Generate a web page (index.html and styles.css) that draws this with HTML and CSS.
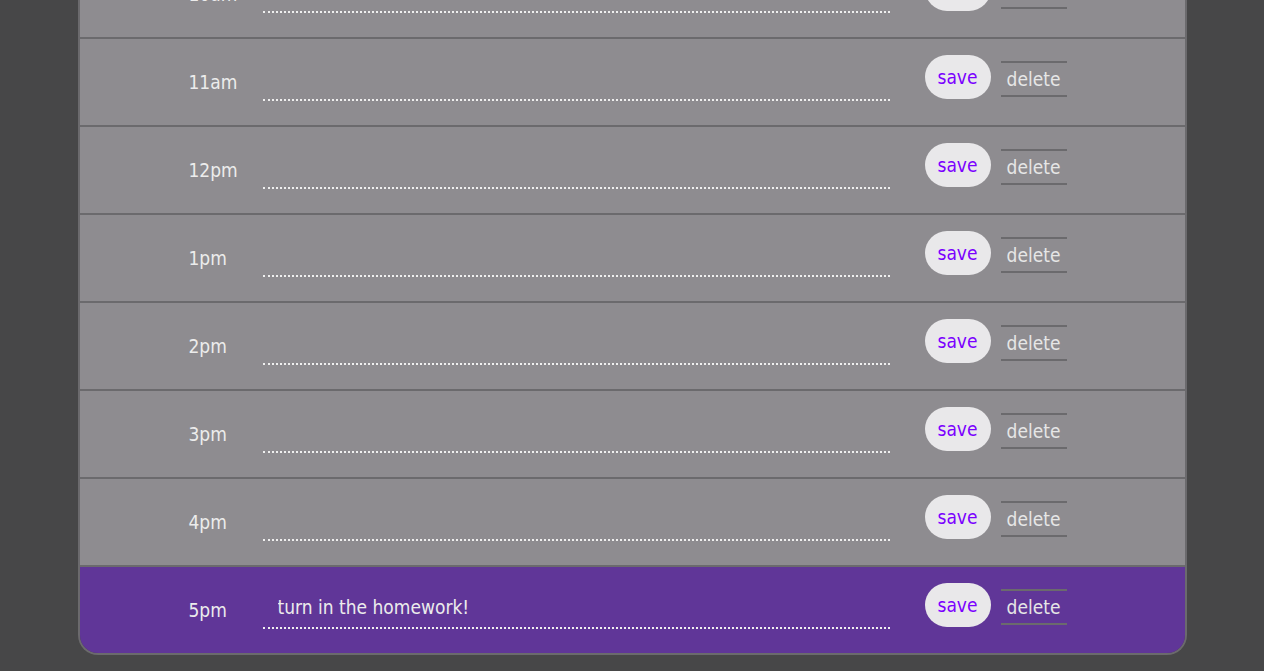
FILE: index.html
```html
<!DOCTYPE html>
<html lang="en">
<head>
<meta charset="utf-8">
<title>Work Day Scheduler</title>
<link rel="stylesheet" href="styles.css">
</head>
<body>
<header class="jumbotron">
  <h1 class="title">Work Day Scheduler</h1>
  <p class="lead">A simple calendar app for scheduling your work day</p>
  <p class="today">Friday, March 3</p>
</header>
<main class="planner">
  <div class="hour-row past"><span class="hour">9am</span><input class="task" type="text"><div class="actions"><button class="save">save</button><button class="delete">delete</button></div></div>
  <div class="hour-row past"><span class="hour">10am</span><input class="task" type="text"><div class="actions"><button class="save">save</button><button class="delete">delete</button></div></div>
  <div class="hour-row past"><span class="hour">11am</span><input class="task" type="text"><div class="actions"><button class="save">save</button><button class="delete">delete</button></div></div>
  <div class="hour-row past"><span class="hour">12pm</span><input class="task" type="text"><div class="actions"><button class="save">save</button><button class="delete">delete</button></div></div>
  <div class="hour-row past"><span class="hour">1pm</span><input class="task" type="text"><div class="actions"><button class="save">save</button><button class="delete">delete</button></div></div>
  <div class="hour-row past"><span class="hour">2pm</span><input class="task" type="text"><div class="actions"><button class="save">save</button><button class="delete">delete</button></div></div>
  <div class="hour-row past"><span class="hour">3pm</span><input class="task" type="text"><div class="actions"><button class="save">save</button><button class="delete">delete</button></div></div>
  <div class="hour-row past"><span class="hour">4pm</span><input class="task" type="text"><div class="actions"><button class="save">save</button><button class="delete">delete</button></div></div>
  <div class="hour-row present"><span class="hour">5pm</span><input class="task" type="text" value="turn in the homework!"><div class="actions"><button class="save">save</button><button class="delete">delete</button></div></div>
</main>
<script src="script.js"></script>
</body>
</html>
```
FILE: styles.css
```css
html, body {
  margin: 0;
  padding: 0;
  background: #474748;
  font-family: "DejaVu Sans Condensed", "DejaVu Sans", sans-serif;
  font-size: 19px;
  color: #ececec;
}

.jumbotron {
  text-align: center;
  padding: 40px 0 30px;
}

.title {
  margin: 0 0 10px;
  font-size: 40px;
  font-weight: normal;
}

.lead, .today {
  margin: 6px 0;
}

.planner {
  width: 1109px;
  margin: 0 auto 16px;
  box-sizing: border-box;
  border: 2px solid #6b6a6d;
  border-top: none;
  border-radius: 0 0 20px 20px;
  overflow: hidden;
}

.hour-row {
  display: flex;
  align-items: center;
  height: 88px;
  box-sizing: border-box;
  border-top: 2px solid #6b6a6d;
  padding-left: 109px;
  background: #8e8c90;
}

.hour-row.present {
  background: #603698;
}

.hour {
  width: 74px;
  color: #ececec;
}

.task {
  width: 627px;
  height: 40px;
  box-sizing: border-box;
  margin: -3px 0 0;
  padding: 0 15px 2px;
  border: none;
  border-bottom: 2px dotted #efefef;
  background: transparent;
  color: #ececec;
  font: inherit;
  outline: none;
}

.actions {
  display: flex;
  align-items: flex-start;
  gap: 10px;
  align-self: flex-start;
  margin-top: 16px;
  margin-left: 35px;
}

.save {
  width: 66px;
  height: 44px;
  padding: 0;
  border: none;
  border-radius: 22px;
  background: #e9e8ea;
  color: #7b00ff;
  font: inherit;
}

.delete {
  width: 66px;
  height: 36px;
  margin-top: 6px;
  padding: 0;
  border: none;
  border-top: 2px solid #6b6a6d;
  border-bottom: 2px solid #6b6a6d;
  background: transparent;
  color: #e6e6e6;
  font: inherit;
}
```
FILE: script.js
```js
window.scrollTo(0, document.documentElement.scrollHeight);
```
